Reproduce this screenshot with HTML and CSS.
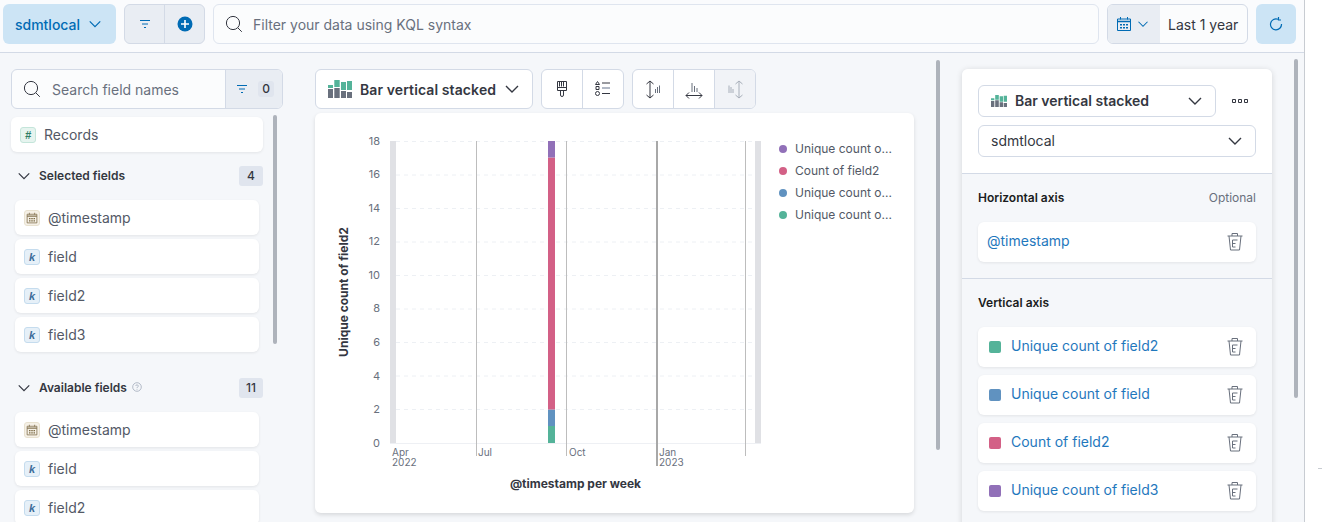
FILE: index.html
```html
<!DOCTYPE html>
<html lang="en">
<head>
    <meta charset="UTF-8">
    <meta name="viewport" content="width=device-width, initial-scale=1.0">
    <title>Lens - sdmtlocal</title>
    <link rel="stylesheet" href="styles.css">
</head>
<body>

    <!-- Shared icons -->
    <svg class="icon-defs" aria-hidden="true">
        <symbol id="i-down" viewBox="0 0 16 16"><path d="M2 5l6 6 6-6" fill="none" stroke="currentColor" stroke-width="1.400"/></symbol>
        <symbol id="i-filter" viewBox="0 0 16 16"><path d="M3 4.500h10M5 8h6M7 11.500h2" fill="none" stroke="currentColor" stroke-width="1"/></symbol>
        <symbol id="i-search" viewBox="0 0 18 18"><circle cx="8" cy="8" r="6.600" fill="none" stroke="currentColor" stroke-width="1"/><path d="M12.800 12.800l4 4" fill="none" stroke="currentColor" stroke-width="1"/></symbol>
        <symbol id="i-trash" viewBox="0 0 16 18"><path d="M.5 3h15M5 3V.5h5.500V3M2 3l1.500 14h9L14 3M5.500 7h5M5.500 7v7h3M5.500 10.500h3" fill="none" stroke="currentColor" stroke-width="1"/></symbol>
        <symbol id="i-cal" viewBox="0 0 16 16"><path d="M1.500 3h13v11.500h-13z" fill="none" stroke="currentColor" stroke-width="1"/><path d="M1.500 5.500h13" stroke="currentColor" stroke-width="1.500"/><path d="M4.500 1v2.500M11.500 1v2.500" stroke="currentColor" stroke-width="1"/><path d="M4 8h2v1.500H4zM7 8h2v1.500H7zM10 8h2v1.500h-2zM4 11h2v1.500H4zM7 11h2v1.500H7zM10 11h2v1.500h-2z" fill="currentColor"/></symbol>
        <symbol id="i-chart" viewBox="0 0 24 18">
            <path fill="#54b399" d="M0 5h5v3H0zM6.300 0h5.400v7H6.300zM13 2h5v8h-5zM19 1h5v9h-5z"/>
            <path fill="#69707d" d="M0 9h5v9H0zM6.300 8h5.400v10H6.300zM13 11h5v7h-5zM19 12h5v6h-5z"/>
        </symbol>
    </svg>

    <div class="page">
        <!-- Query Bar -->
        <header class="topbar">
            <button class="btn btn-view">sdmtlocal <svg class="ico-14"><use href="#i-down"/></svg></button>
            <div class="filter-group">
                <span class="filter-cell"><svg class="ico-16"><use href="#i-filter"/></svg></span>
                <span class="filter-cell">
                    <svg class="ico-18" viewBox="0 0 18 18"><circle cx="9" cy="9" r="7.500" fill="#006bb4"/><path d="M9 5v8M5 9h8" stroke="#fff" stroke-width="1.600"/></svg>
                </span>
            </div>
            <div class="query">
                <svg class="ico-search"><use href="#i-search"/></svg>
                <span>Filter your data using KQL syntax</span>
            </div>
            <div class="date-group">
                <span class="date-picker">
                    <svg class="ico-16"><use href="#i-cal"/></svg>
                    <svg class="ico-12"><use href="#i-down"/></svg>
                </span>
                <span class="date-label">Last 1 year</span>
            </div>
            <button class="btn btn-refresh">
                <svg class="ico-16" viewBox="0 0 16 16"><path d="M10 3.200A5.500 5.500 0 1 0 13.500 8M10.500 1v3H13" fill="none" stroke="currentColor" stroke-width="1.200"/></svg>
            </button>
        </header>

        <main class="workspace">
            <!-- Field List -->
            <aside class="sidebar">
                <div class="field-search">
                    <div class="field-search-input">
                        <svg class="ico-search"><use href="#i-search"/></svg>
                        <span>Search field names</span>
                    </div>
                    <div class="field-search-filter">
                        <svg class="ico-16 blue"><use href="#i-filter"/></svg>
                        <span class="count">0</span>
                    </div>
                </div>
                <div class="sidebar-body">
                    <div class="field-list">
                        <div class="record-card"><span class="token token-num">#</span>Records</div>

                        <div class="group-head">
                            <svg class="ico-14"><use href="#i-down"/></svg>
                            <span class="group-title">Selected fields</span>
                            <span class="badge">4</span>
                        </div>
                        <div class="field-card"><span class="token token-date"><svg class="ico-12"><use href="#i-cal"/></svg></span>@timestamp</div>
                        <div class="field-card"><span class="token token-key">k</span>field</div>
                        <div class="field-card"><span class="token token-key">k</span>field2</div>
                        <div class="field-card"><span class="token token-key">k</span>field3</div>

                        <div class="group-head group-available">
                            <svg class="ico-14"><use href="#i-down"/></svg>
                            <span class="group-title">Available fields</span>
                            <svg class="ico-help" viewBox="0 0 10 10"><circle cx="5" cy="5" r="4.300" fill="none" stroke="#98a2b3" stroke-width=".7"/><path d="M3.700 4a1.300 1.200 0 1 1 1.700 1.200Q5 5.500 5 6.200M5 7.100v.7" fill="none" stroke="#98a2b3" stroke-width=".7"/></svg>
                            <span class="badge">11</span>
                        </div>
                        <div class="field-card"><span class="token token-date"><svg class="ico-12"><use href="#i-cal"/></svg></span>@timestamp</div>
                        <div class="field-card"><span class="token token-key">k</span>field</div>
                        <div class="field-card"><span class="token token-key">k</span>field2</div>
                    </div>
                    <div class="scroll-thumb thumb-fields"></div>
                </div>
            </aside>

            <!-- Chart Area -->
            <section class="center">
                <div class="chart-toolbar">
                    <button class="chart-switch">
                        <svg class="ico-chart"><use href="#i-chart"/></svg>
                        <span class="chart-switch-label">Bar vertical stacked</span>
                        <svg class="ico-16"><use href="#i-down"/></svg>
                    </button>
                    <div class="tool-group">
                        <span class="tool">
                            <svg class="ico-20" viewBox="0 0 20 20"><path d="M5.500 2.500h9v9h-9zM5.500 8.500h9M8.500 11.500v4.500a1.500 1.500 0 0 0 3 0v-4.500M7.500 2.500v5M9.500 2.500v5M11.500 2.500v5" fill="none" stroke="currentColor" stroke-width="1"/></svg>
                        </span>
                        <span class="tool">
                            <svg class="ico-20" viewBox="0 0 20 20"><path d="M4.500 2.500l2 3h-4zM3 7.500h3v3H3z" fill="none" stroke="currentColor" stroke-width="1"/><circle cx="4.500" cy="14.500" r="2" fill="none" stroke="currentColor" stroke-width="1"/><path d="M9 4h8M9 14.500h8" stroke="currentColor" stroke-width="1"/><path d="M9 9h8" stroke="#98a2b3" stroke-width="1.500"/></svg>
                        </span>
                    </div>
                    <div class="tool-group">
                        <span class="tool">
                            <svg class="ico-20" viewBox="0 0 20 20"><path d="M7 2v17M3.500 5L7 2l3.500 3M3.500 16L7 19l3.500-3" fill="none" stroke="currentColor" stroke-width="1"/><path d="M12.500 10v4M14.500 8v6M16.500 6.500V14" stroke="#69707d" stroke-width="1"/></svg>
                        </span>
                        <span class="tool">
                            <svg class="ico-20" viewBox="0 0 20 20"><path d="M2 16.500h16M5 13.500l-3 3 3 3M15 13.500l3 3-3 3" fill="none" stroke="currentColor" stroke-width="1"/><path d="M8 4v9M10.500 7v6M13 9v4" stroke="#69707d" stroke-width="1"/></svg>
                        </span>
                        <span class="tool tool-off">
                            <svg class="ico-20" viewBox="0 0 20 20"><path d="M14 2v17M10.500 5L14 2l3.500 3M10.500 16l3.500 3 3.500-3M4 6.500V14M6 8v6M8 10v4" fill="none" stroke="currentColor" stroke-width="1"/></svg>
                        </span>
                    </div>
                </div>

                <div class="chart-panel">
                    <svg class="chart" viewBox="315 113 460 400" width="460" height="400">
                        <g class="grid">
                            <path d="M396 141.500h359M396 175h359M396 208.500h359M396 242h359M396 275.500h359M396 309h359M396 342.500h359M396 376h359M396 409.500h359"/>
                        </g>
                        <path class="axis-line" d="M390 443.500h371"/>
                        <rect class="band" x="390" y="141" width="6" height="302"/>
                        <rect class="band" x="755" y="141" width="6" height="302"/>
                        <path class="tick" d="M476.500 141v315M566.500 141v315M745.500 141v315"/>
                        <path class="tick-major" d="M657 141v325"/>
                        <rect x="548" y="426" width="7" height="17" fill="#54b399"/>
                        <rect x="548" y="409.500" width="7" height="16.500" fill="#6092c0"/>
                        <rect x="548" y="157.500" width="7" height="252" fill="#d36086"/>
                        <rect x="548" y="141" width="7" height="16.500" fill="#9170b8"/>
                        <g class="y-labels">
                            <text x="380" y="145">18</text><text x="380" y="178">16</text>
                            <text x="380" y="212">14</text><text x="380" y="245">12</text>
                            <text x="380" y="279">10</text><text x="380" y="312">8</text>
                            <text x="380" y="346">6</text><text x="380" y="380">4</text>
                            <text x="380" y="413">2</text><text x="380" y="447">0</text>
                        </g>
                        <g class="x-labels">
                            <text x="392" y="456">Apr</text><text x="392" y="466">2022</text>
                            <text x="478" y="456">Jul</text><text x="569" y="456">Oct</text>
                            <text x="659" y="456">Jan</text><text x="659" y="466">2023</text>
                        </g>
                        <text class="axis-title" x="575.500" y="488" text-anchor="middle">@timestamp per week</text>
                        <text class="axis-title" transform="translate(348 292) rotate(-90)" text-anchor="middle">Unique count of field2</text>
                    </svg>
                    <ul class="legend">
                        <li><i class="dot purple"></i><span>Unique count o...</span></li>
                        <li><i class="dot pink"></i><span>Count of field2</span></li>
                        <li><i class="dot blue-dot"></i><span>Unique count o...</span></li>
                        <li><i class="dot green"></i><span>Unique count o...</span></li>
                    </ul>
                </div>
            </section>
            <div class="scroll-thumb thumb-center"></div>

            <!-- Config Panel -->
            <section class="config">
                <div class="config-head">
                    <div class="config-row">
                        <button class="select select-chart">
                            <svg class="ico-chart-sm"><use href="#i-chart"/></svg>
                            <span class="select-bold">Bar vertical stacked</span>
                            <svg class="ico-16"><use href="#i-down"/></svg>
                        </button>
                        <svg class="ico-dots" viewBox="0 0 16 4"><path d="M.5.5h3v3h-3zM6.500.5h3v3h-3zM12.500.5h3v3h-3z" fill="none" stroke="#343741" stroke-width="1"/></svg>
                    </div>
                    <button class="select select-index">
                        <span>sdmtlocal</span>
                        <svg class="ico-16"><use href="#i-down"/></svg>
                    </button>
                </div>

                <div class="axis-section">
                    <div class="axis-head"><strong>Horizontal axis</strong><span>Optional</span></div>
                    <div class="dim-card">
                        <a class="dim-name dim-plain">@timestamp</a>
                        <svg class="ico-trash"><use href="#i-trash"/></svg>
                    </div>
                </div>

                <div class="axis-section axis-vertical">
                    <div class="axis-head"><strong>Vertical axis</strong></div>
                    <div class="dim-card">
                        <i class="swatch green"></i><a class="dim-name">Unique count of field2</a>
                        <svg class="ico-trash"><use href="#i-trash"/></svg>
                    </div>
                    <div class="dim-card">
                        <i class="swatch blue-dot"></i><a class="dim-name">Unique count of field</a>
                        <svg class="ico-trash"><use href="#i-trash"/></svg>
                    </div>
                    <div class="dim-card">
                        <i class="swatch pink"></i><a class="dim-name">Count of field2</a>
                        <svg class="ico-trash"><use href="#i-trash"/></svg>
                    </div>
                    <div class="dim-card">
                        <i class="swatch purple"></i><a class="dim-name">Unique count of field3</a>
                        <svg class="ico-trash"><use href="#i-trash"/></svg>
                    </div>
                </div>
            </section>
            <div class="scroll-thumb thumb-config"></div>
        </main>
    </div>

    <div class="edge"><div class="edge-mark"></div></div>

</body>
</html>
```

FILE: styles.css
```css
/* General Page Styling */
html, body {
    margin: 0;
    height: 522px;
    overflow: hidden;
}

body {
    display: flex;
    background: #fff;
    color: #343741;
    font-family: Inter, 'Liberation Sans', sans-serif;
    font-size: 14px;
}

button {
    font-family: inherit;
    font-size: inherit;
    color: inherit;
    padding: 0;
    background: none;
    border: none;
}

svg {
    display: block;
    flex: none;
}

.icon-defs {
    width: 0;
    height: 0;
    position: absolute;
}

.ico-12 { width: 12px; height: 12px; }
.ico-14 { width: 14px; height: 14px; }
.ico-16 { width: 16px; height: 16px; }
.ico-18 { width: 18px; height: 18px; }
.ico-20 { width: 20px; height: 20px; }
.blue { color: #006bb4; }

.ico-search {
    width: 18px;
    height: 18px;
    color: #343741;
}

.page {
    width: 1304px;
    flex: none;
    background: #f5f7fa;
}

.edge {
    width: 17px;
    border-left: 1px solid #c8ccd2;
}

.edge-mark {
    width: 4px;
    height: 1px;
    margin: 468px 0 0 auto;
    background: #c8ccd2;
}

/* Query Bar */
.topbar {
    display: flex;
    gap: 8px;
    height: 53px;
    box-sizing: border-box;
    padding: 4px 8px 8px 3px;
    background: #fafbfd;
    border-bottom: 1px solid #d3dae6;
}

.btn {
    display: flex;
    align-items: center;
    justify-content: center;
    height: 40px;
    border-radius: 6px;
    background: #cce4f5;
    color: #006bb4;
}

.btn-view {
    width: 113px;
    gap: 8px;
    padding-right: 2px;
    font-weight: 500;
}

.btn-refresh {
    width: 40px;
}

.filter-group {
    display: flex;
    width: 81px;
    box-sizing: border-box;
    border: 1px solid #d3dae6;
    border-radius: 6px;
    background: #e9edf3;
    color: #006bb4;
}

.filter-cell {
    flex: 1;
    display: flex;
    align-items: center;
    justify-content: center;
}

.filter-cell + .filter-cell {
    border-left: 1px solid #d3dae6;
}

.query {
    flex: 1;
    display: flex;
    align-items: center;
    gap: 10px;
    padding-left: 11px;
    border: 1px solid #dfe5ef;
    border-radius: 6px;
    background: #fbfcfd;
    color: #69707d;
}

.query span {
    padding-top: 1px;
}

.date-group {
    display: flex;
    width: 141px;
    box-sizing: border-box;
    border: 1px solid #d3dae6;
    border-radius: 6px;
    background: #fbfcfd;
    overflow: hidden;
}

.date-picker {
    display: flex;
    align-items: center;
    gap: 5px;
    width: 52px;
    box-sizing: border-box;
    padding-left: 8px;
    background: #e9edf3;
    color: #006bb4;
}

.date-label {
    flex: 1;
    display: flex;
    align-items: center;
    padding-left: 8px;
}

/* Workspace Columns */
.workspace {
    display: flex;
    align-items: flex-start;
    height: 469px;
    overflow: hidden;
}

.scroll-thumb {
    width: 4px;
    flex: none;
    border-radius: 2px;
    background: #aeb3bb;
}

/* Field List */
.sidebar {
    width: 272px;
    flex: none;
    margin-left: 11px;
    padding-top: 16px;
}

.field-search {
    display: flex;
    height: 40px;
    box-sizing: border-box;
    border: 1px solid #d3dae6;
    border-radius: 6px;
    background: #fbfcfd;
    overflow: hidden;
}

.field-search-input {
    flex: 1;
    display: flex;
    align-items: center;
    gap: 11px;
    padding-left: 11px;
    color: #69707d;
}

.field-search-filter {
    display: flex;
    align-items: center;
    gap: 8px;
    width: 57px;
    box-sizing: border-box;
    padding-left: 8px;
    background: #e9edf3;
    border-left: 1px solid #d3dae6;
}

.count {
    width: 16px;
    height: 16px;
    line-height: 16px;
    text-align: center;
    border-radius: 3px;
    background: #e0e5ee;
    font-size: 12px;
    font-weight: 500;
}

.sidebar-body {
    display: flex;
    gap: 10px;
    margin-top: 8px;
    align-items: flex-start;
}

.field-list {
    width: 252px;
    flex: none;
}

.record-card,
.field-card {
    display: flex;
    align-items: center;
    gap: 8px;
    height: 35px;
    border-radius: 6px;
    background: #fff;
    box-shadow: 0 1px 3px rgba(0, 0, 0, 0.08);
    color: #535966;
}

.record-card {
    padding-left: 9px;
}

.field-card {
    margin: 0 4px 4px;
    padding-left: 9px;
}

.token {
    width: 16px;
    height: 16px;
    box-sizing: border-box;
    display: flex;
    align-items: center;
    justify-content: center;
    border-radius: 3px;
    font: italic bold 11px 'Liberation Sans', sans-serif;
    flex: none;
}

.token-num {
    background: #e6f4ef;
    border: 1px solid #c4e5da;
    color: #2f7d65;
}

.token-key {
    background: #e6f0f8;
    border: 1px solid #c5dcee;
    color: #3c6c99;
}

.token-date {
    background: #f5f0e6;
    border: 1px solid #e8e1cf;
    color: #7b6a45;
}

.group-head {
    display: flex;
    align-items: center;
    height: 20px;
    margin: 14px 0;
}

.group-head .ico-14 {
    margin: 0 8px 0 6px;
}

.group-available {
    margin-top: 26px;
}

.group-title {
    margin-top: -2px;
    font-size: 12px;
    font-weight: 600;
}

.ico-help {
    width: 10px;
    height: 10px;
    margin: -3px 0 0 5px;
}

.badge {
    margin-left: auto;
    width: 24px;
    height: 20px;
    line-height: 20px;
    text-align: center;
    border-radius: 3px;
    background: #e0e5ee;
    font-size: 12px;
    font-weight: 500;
}

.thumb-fields {
    height: 229px;
    margin-top: -2px;
}

/* Chart Area */
.center {
    width: 599px;
    flex: none;
    margin-left: 32px;
    padding-top: 16px;
}

.chart-toolbar {
    display: flex;
    gap: 8px;
    height: 40px;
}

.chart-switch {
    display: flex;
    align-items: center;
    width: 218px;
    box-sizing: border-box;
    padding-left: 12px;
    border: 1px solid #d3dae6;
    border-radius: 6px;
    background: #fff;
    font-weight: 600;
}

.chart-switch-label {
    letter-spacing: 0.1px;
}

.ico-chart {
    width: 24px;
    height: 18px;
    margin-right: 8px;
}

.chart-switch .ico-16 {
    margin-left: 8px;
}

.tool-group {
    display: flex;
    border: 1px solid #d3dae6;
    border-radius: 6px;
    background: #fff;
    overflow: hidden;
}

.tool {
    width: 40px;
    display: flex;
    align-items: center;
    justify-content: center;
}

.tool + .tool {
    border-left: 1px solid #d3dae6;
}

.tool-off {
    background: #f1f3f7;
    color: #a7aeb9;
}

.chart-panel {
    display: flex;
    height: 400px;
    margin-top: 4px;
    border-radius: 6px;
    background: #fff;
    box-shadow: 0 2px 4px rgba(0, 0, 0, 0.12);
}

.chart text {
    font-family: Inter, 'Liberation Sans', sans-serif;
}

.grid path {
    fill: none;
    stroke: #edf0f4;
    stroke-width: 1;
    stroke-dasharray: 4 4;
}

.axis-line {
    stroke: #eef0f4;
    stroke-width: 1;
}

.band {
    fill: #e0e1e5;
}

.tick {
    stroke: #bdbdbd;
    stroke-width: 1;
    fill: none;
}

.tick-major {
    stroke: #a8a8a8;
    stroke-width: 2;
    fill: none;
}

.y-labels text {
    font-size: 11px;
    fill: #69707d;
    text-anchor: end;
}

.x-labels text {
    font-size: 10px;
    fill: #69707d;
}

.axis-title {
    font-size: 12px;
    font-weight: 700;
    fill: #343741;
}

.legend {
    list-style: none;
    margin: 25px 0 0;
    padding: 0;
    font-size: 12px;
    color: #535966;
}

.legend li {
    display: flex;
    align-items: center;
    gap: 8px;
    height: 22px;
    padding-left: 4px;
    white-space: nowrap;
}

.legend span {
    margin-top: -1px;
}

.dot {
    width: 8px;
    height: 8px;
    flex: none;
    border-radius: 50%;
}

.green { background: #54b399; }
.blue-dot { background: #6092c0; }
.pink { background: #d36086; }
.purple { background: #9170b8; }

.thumb-center {
    height: 390px;
    margin: 7px 0 0 22px;
}

/* Config Panel */
.config {
    width: 310px;
    flex: none;
    margin: 16px 0 0 22px;
    border-radius: 6px 6px 0 0;
    background: #f5f7fa;
    box-shadow: 0 1px 6px rgba(0, 0, 0, 0.14);
    height: 470px;
}

.config-head {
    display: flex;
    flex-direction: column;
    gap: 8px;
    padding: 16px;
    background: #fff;
    border-radius: 6px 6px 0 0;
    border-bottom: 1px solid #d3dae6;
}

.config-row {
    display: flex;
    align-items: center;
}

.select {
    display: flex;
    align-items: center;
    height: 32px;
    box-sizing: border-box;
    border: 1px solid #d3dae6;
    border-radius: 6px;
    background: #fff;
    padding: 0 12px;
}

.select span {
    margin-top: -1px;
}

.select-chart {
    width: 238px;
}

.select-index {
    width: 278px;
}

.select-bold {
    font-weight: 600;
}

.select .ico-16 {
    margin-left: auto;
}

.ico-chart-sm {
    width: 16px;
    height: 12px;
    margin-right: 8px;
}

.ico-dots {
    width: 16px;
    height: 4px;
    margin-left: 16px;
}

.axis-section {
    padding: 16px 16px 16px;
}

.axis-vertical {
    border-top: 1px solid #d3dae6;
}

.axis-head {
    display: flex;
    justify-content: space-between;
    height: 16px;
    line-height: 16px;
    margin-bottom: 16px;
    font-size: 12px;
    color: #69707d;
}

.axis-head strong {
    font-weight: 600;
    color: #1a1c21;
}

.dim-card {
    display: flex;
    align-items: center;
    height: 40px;
    padding: 0 13px 0 11px;
    margin-bottom: 8px;
    border-radius: 6px;
    background: #fff;
    box-shadow: 0 1px 3px rgba(0, 0, 0, 0.08);
}

.dim-card:last-child {
    margin-bottom: 0;
}

.dim-name {
    padding-bottom: 3px;
    color: #1f78bd;
    margin-left: 10px;
}

.dim-plain {
    margin-left: -2px;
}

.swatch {
    width: 12px;
    height: 12px;
    border-radius: 2px;
}

.ico-trash {
    width: 16px;
    height: 18px;
    margin-left: auto;
    color: #69707d;
}

.thumb-config {
    height: 339px;
    margin: 6px 0 0 22px;
}
```
